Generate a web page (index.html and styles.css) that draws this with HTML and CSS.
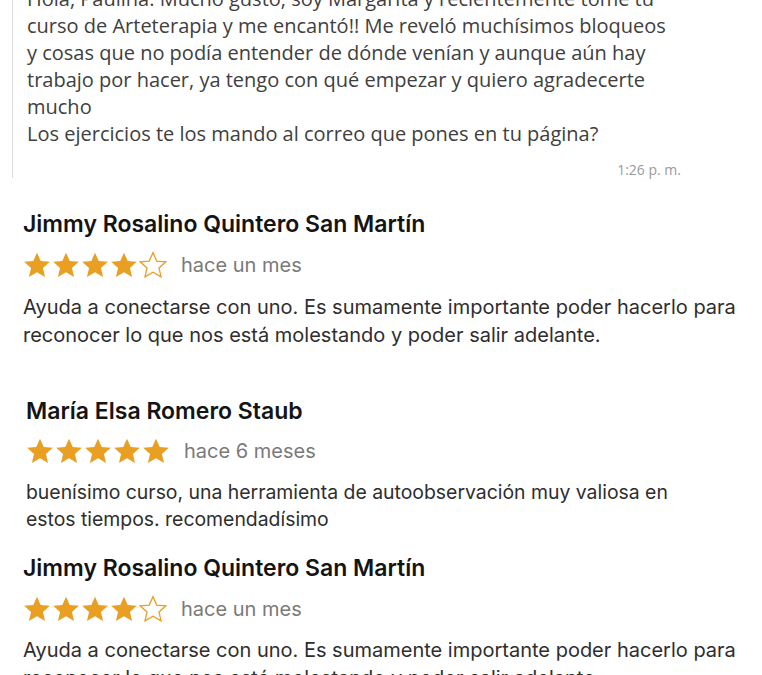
FILE: index.html
```html
<!DOCTYPE html>
<html lang="es">
<head>
    <meta charset="UTF-8">
    <meta name="viewport" content="width=device-width, initial-scale=1.0">
    <title>Testimonios</title>
    <link rel="stylesheet" href="styles.css">
</head>
<body>
    <svg width="0" height="0" class="defs">
        <defs>
            <path id="star" d="M12 1.4l3.2 7.2 7.8.7-5.9 5.2 1.8 7.7L12 18.2 5.1 22.2l1.8-7.7L1 9.3l7.8-.7z"/>
        </defs>
    </svg>

    <div class="chat">
        <p class="chat-text">Hola, Paulina. Mucho gusto, soy Margarita y recientemente tomé tu<br>
        curso de Arteterapia y me encantó!! Me reveló muchísimos bloqueos<br>
        y cosas que no podía entender de dónde venían y aunque aún hay<br>
        trabajo por hacer, ya tengo con qué empezar y quiero agradecerte<br>
        mucho<br>
        Los ejercicios te los mando al correo que pones en tu página?</p>
        <div class="chat-time">1:26 p. m.</div>
    </div>

    <div class="review first">
        <h2 class="name">Jimmy Rosalino Quintero San Martín</h2>
        <div class="rating">
            <span class="stars">
                <svg class="star" viewBox="0 0 24 24"><use href="#star"/></svg>
                <svg class="star" viewBox="0 0 24 24"><use href="#star"/></svg>
                <svg class="star" viewBox="0 0 24 24"><use href="#star"/></svg>
                <svg class="star" viewBox="0 0 24 24"><use href="#star"/></svg>
                <svg class="star empty" viewBox="0 0 24 24"><use href="#star"/></svg>
            </span>
            <span class="when">hace un mes</span>
        </div>
        <p class="text">Ayuda a conectarse con uno. Es sumamente importante poder hacerlo para<br>
        reconocer lo que nos está molestando y poder salir adelante.</p>
    </div>

    <div class="review second">
        <h2 class="name">María Elsa Romero Staub</h2>
        <div class="rating">
            <span class="stars">
                <svg class="star" viewBox="0 0 24 24"><use href="#star"/></svg>
                <svg class="star" viewBox="0 0 24 24"><use href="#star"/></svg>
                <svg class="star" viewBox="0 0 24 24"><use href="#star"/></svg>
                <svg class="star" viewBox="0 0 24 24"><use href="#star"/></svg>
                <svg class="star" viewBox="0 0 24 24"><use href="#star"/></svg>
            </span>
            <span class="when">hace 6 meses</span>
        </div>
        <p class="text">buenísimo curso, una herramienta de autoobservación muy valiosa en<br>
        estos tiempos. recomendadísimo</p>
    </div>

    <div class="review third">
        <h2 class="name">Jimmy Rosalino Quintero San Martín</h2>
        <div class="rating">
            <span class="stars">
                <svg class="star" viewBox="0 0 24 24"><use href="#star"/></svg>
                <svg class="star" viewBox="0 0 24 24"><use href="#star"/></svg>
                <svg class="star" viewBox="0 0 24 24"><use href="#star"/></svg>
                <svg class="star" viewBox="0 0 24 24"><use href="#star"/></svg>
                <svg class="star empty" viewBox="0 0 24 24"><use href="#star"/></svg>
            </span>
            <span class="when">hace un mes</span>
        </div>
        <p class="text">Ayuda a conectarse con uno. Es sumamente importante poder hacerlo para<br>
        reconocer lo que nos está molestando y poder salir adelante.</p>
    </div>
</body>
</html>
```

FILE: styles.css
```css
body {
    margin: 0;
    padding: 0;
    background-color: #fff;
    overflow: hidden;
    height: 675px;
}

.defs {
    position: absolute;
}

/* chat message */
.chat {
    margin: -15px 0 0 12px;
    border-left: 1px solid #dcdcdc;
    padding: 0 0 0 14px;
}

.chat-text {
    margin: 0;
    font-family: "Open Sans", sans-serif;
    font-size: 20px;
    line-height: 27px;
    color: #404040;
}

.chat-time {
    margin-top: 15px;
    padding-right: 81px;
    text-align: right;
    font-family: "Open Sans", sans-serif;
    font-size: 14px;
    line-height: 16px;
    color: #9a9a9a;
}

/* reviews */
.review {
    display: flex;
    flex-direction: column;
    padding-left: 23px;
    font-family: Inter, sans-serif;
}

.review.first {
    margin-top: 31px;
}

.review.second {
    margin-top: 47px;
    padding-left: 26px;
}

.review.third {
    margin-top: 20px;
}

.name {
    margin: 0;
    font-size: 23px;
    line-height: 30px;
    font-weight: 600;
    color: #141414;
}

.rating {
    display: flex;
    align-items: center;
    height: 30px;
    margin-top: 11px;
}

.second .rating {
    margin-top: 10px;
}

.stars {
    display: flex;
    gap: 1px;
}

.star {
    width: 28px;
    height: 28px;
    fill: #e99f22;
}

.star.empty {
    fill: none;
    stroke: #e99f22;
    stroke-width: 1.1;
}

.when {
    margin-left: 14px;
    font-size: 20px;
    color: #7a7a7a;
}

.text {
    margin: 13px 0 0;
    font-size: 20px;
    line-height: 28px;
    color: #2e2e2e;
}

.second .text {
    font-size: 19.4px;
    line-height: 27px;
}

.third .text {
    margin-top: 12px;
}
```
